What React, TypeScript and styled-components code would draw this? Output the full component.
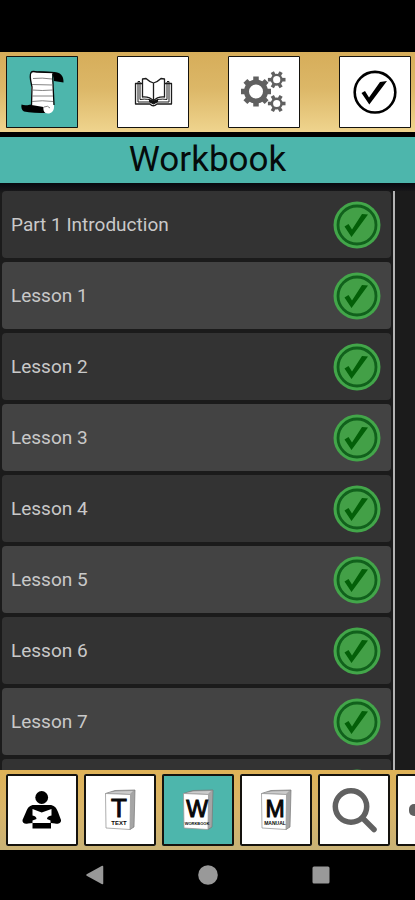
import React from "react";
import styled, { createGlobalStyle } from "styled-components";

const GlobalStyle = createGlobalStyle`
  *, *::before, *::after { box-sizing: border-box; }
  body { margin: 0; background: #000; font-family: Roboto, "Liberation Sans", sans-serif; }
  button { font: inherit; padding: 0; border: 0; background: none; cursor: pointer; }
  svg { display: block; flex: none; }
`;

const TEAL = "#4db6ac";

const Screen = styled.div`
  display: flex;
  flex-direction: column;
  height: 100vh;
  overflow: hidden;
  background: #000;
`;

const StatusBar = styled.div`
  flex: none;
  height: 52px;
`;

const TopBar = styled.nav`
  flex: none;
  display: flex;
  justify-content: space-between;
  padding: 4px 4px 4px 6px;
  background: linear-gradient(#d6ad5a, #dcb767 45%, #efd48e);
`;

const BottomBar = styled.nav`
  flex: none;
  display: flex;
  gap: 6px;
  padding: 4px 6px;
  overflow: hidden;
  background: linear-gradient(#dfb257, #d9b569 50%, #c9b276);
`;

const Tile = styled.button<{ $active?: boolean; $line: number }>`
  flex: none;
  border-radius: ${(p) => p.$line}px;
  background: ${(p) => (p.$active ? TEAL : "#fff")};
  box-shadow: inset 0 0 0 ${(p) => p.$line}px #15130e;
`;

const Title = styled.h1`
  flex: none;
  margin: 5px 0 0;
  height: 46px;
  background: ${TEAL};
  color: #050b0b;
  font-size: 35px;
  font-weight: 400;
  line-height: 46px;
  text-align: center;
`;

const Content = styled.main`
  flex: 1;
  min-height: 0;
  display: flex;
  padding-top: 8px;
  overflow: hidden;
  background: linear-gradient(#080a10, #1b1b1b 10px);
`;

const Lessons = styled.ul`
  flex: 1;
  margin: 0;
  padding: 0 2px;
  list-style: none;
  display: flex;
  flex-direction: column;
  gap: 4px;
`;

const ScrollTrack = styled.div`
  flex: none;
  width: 22px;
  border-left: 2px solid #b4b4b4;
  background: #1b1b1b;
`;

const Lesson = styled.li`
  flex: none;
  &:nth-child(odd) { background: #333; }
  &:nth-child(even) { background: #434343; }
  border-radius: 4px;
`;

const LessonButton = styled.button`
  display: flex;
  align-items: center;
  justify-content: space-between;
  width: 100%;
  height: 67px;
  padding: 0 10px 0 9px;
  color: #c9c9c9;
  font-size: 19px;
  line-height: 24px;
  text-align: left;
`;

const SystemNav = styled.nav`
  flex: none;
  display: flex;
  justify-content: center;
  gap: 65px;
  height: 50px;
`;

const SystemButton = styled.button`
  display: grid;
  place-items: center;
  width: 48px;
`;

const TileArt = ({ children }: { children: React.ReactNode }) => (
  <svg width="72" height="72" viewBox="0 0 72 72" aria-hidden="true">
    {children}
  </svg>
);

const ScrollIcon = () => (
  <TileArt>
    <path d="M27 15 48 16C54 16 58 20 57.500 26.500L48 25C48 21 47 19 45 18Z" fill="#000" />
    <path d="M15.500 48.500C19 50 23 49 28 48L42 50V57C32 57 24 57 18 55.500C15.500 54 15 51 15.500 48.500Z" fill="#000" />
    <path d="M25 18C26 15 29 15.500 31 16L47 16.500C45 19 46.500 23 47 28L48 51C48 55 45.500 57.500 42 57.500C38 57.500 37 54 37.500 51L25.500 49Z" fill="#fff" />
    <path d="M25.500 49 26 31C25 26 23 20 25 16.500C26 15 29 15.500 31 16L48 16.500C46 20 47 24 47 28L48 49" fill="none" stroke="#050505" strokeWidth="1.300" />
    <path d="M27 22.500Q36 21.500 46 23M26 28.500 47 29M26 34Q36 35 47 34M26 40 47 40M26 45.500Q36 44 47 45.500M38 51Q42 49 44 52" fill="none" stroke="#777" strokeWidth="0.900" />
  </TileArt>
);

const OpenBookIcon = () => (
  <TileArt>
    <g fill="none" stroke="#1c1c1c" strokeWidth="1.300" strokeLinejoin="round">
      <path d="M25 27.500H18.500V48H33Q36 51.500 40 48H54.500V27.500H48" />
      <path d="M23 25.500H21V46H33L36.500 48 40 46H52V25.500H50" strokeWidth="1" />
      <path d="M23 26V43.500Q32 42 36.500 46Q41 42 50 43.500V26" strokeWidth="1" />
      <path d="M36.500 27Q32 25.500 29 22.500L25.500 23V41Q33 40.500 36.500 45Q40 40.500 47.500 41V23L44 22.500Q41 25.500 36.500 27V44" />
    </g>
    <path d="M32 43 36.500 45 41 43V46L36.500 48 32 46Z" fill="#111" />
  </TileArt>
);

type GearProps = { x: number; y: number; r: number; body: number; hole: number; teeth: number; tooth: number };

const Gear = ({ x, y, r, body, hole, teeth, tooth }: GearProps) => (
  <g transform={`translate(${x} ${y})`}>
    <circle r={(body + hole) / 2} fill="none" stroke="#606060" strokeWidth={body - hole} />
    {Array.from({ length: teeth }, (_, i) => (
      <rect
        key={i}
        x={body - 1}
        y={-tooth / 2}
        width={r - body + 1}
        height={tooth}
        fill="#606060"
        transform={`rotate(${(i * 360) / teeth})`}
      />
    ))}
  </g>
);

const GearsIcon = () => (
  <TileArt>
    <Gear x={28} y={35.5} r={15} body={12} hole={7} teeth={8} tooth={5.5} />
    <Gear x={48.7} y={23.7} r={8.8} body={6} hole={3.6} teeth={6} tooth={3.6} />
    <Gear x={48.7} y={47.5} r={8.8} body={6} hole={3.6} teeth={6} tooth={3.6} />
  </TileArt>
);

const CheckIcon = () => (
  <TileArt>
    <circle cx="36" cy="36.200" r="20.300" fill="none" stroke="#000" strokeWidth="2.600" />
    <path d="M22.500 37 26 35 30 41.500 41 26 48 25 30.300 48.500Z" fill="#000" />
  </TileArt>
);

const DoneBadge = () => (
  <svg width="48" height="48" viewBox="0 0 48 48" role="img" aria-label="Completed">
    <circle cx="24" cy="24" r="23.500" fill="#43a64a" />
    <circle cx="24" cy="24" r="19" fill="#43a047" stroke="#11611c" strokeWidth="2.800" />
    <path d="M11.500 25.500 15.500 23 19 28.500 29 13 35 13.500 18.500 36Z" fill="#035f08" />
  </svg>
);

const ReaderIcon = () => (
  <TileArt>
    <circle cx="35.700" cy="23.500" r="6.400" fill="#000" />
    <path d="M28 31H43.500C48 31 50 33 52 38L55 46C55.500 49 52 50.500 49 49.500L45 49V54.500H26.500V49L22 49.500C19 50.500 16 49 16.500 46L20 38C22 33 24 31 28 31Z" fill="#000" />
    <path d="M26.500 35 35.700 38.500 45.500 35V41.500Q41 42 41 45L44.500 46.500V49H26.500V46.500L30.500 45Q30.500 42 26.500 41.500Z" fill="#fff" />
  </TileArt>
);

type VolumeProps = { letter: string; label: string; labelSize: number; letterSize: number };

const VolumeIcon = ({ letter, label, labelSize, letterSize }: VolumeProps) => (
  <TileArt>
    <path d="M21.500 19.500 31 16.500 51 16 50 53 46 55.500Z" fill="#a5a5a5" stroke="#777" strokeWidth="0.700" />
    <path d="M24 19 32 17.500 49 17 46 20Z" fill="#ccc" />
    <path d="M21.500 19.500 46.500 20.500 46 55.500 22 54Z" fill="#fff" stroke="#999" strokeWidth="0.800" />
    <g fill="#080808" textAnchor="middle" fontFamily="Liberation Sans, sans-serif">
      <text x="35" y="43" fontSize={letterSize} stroke="#080808" strokeWidth="1">{letter}</text>
      <text x="35" y="51" fontSize={labelSize} fontWeight="700">{label}</text>
    </g>
  </TileArt>
);

const SearchIcon = () => (
  <TileArt>
    <circle cx="33" cy="32.500" r="15.700" fill="none" stroke="#616161" strokeWidth="5.500" />
    <path d="M44.500 44 56 55.500" stroke="#616161" strokeWidth="5.500" strokeLinecap="round" />
  </TileArt>
);

const MoreIcon = () => (
  <TileArt>
    <rect x="13" y="30" width="46" height="12" rx="5" fill="#606060" />
  </TileArt>
);

const topItems = [
  { name: "Lessons", icon: <ScrollIcon />, active: true },
  { name: "Reading", icon: <OpenBookIcon /> },
  { name: "Settings", icon: <GearsIcon /> },
  { name: "Completed", icon: <CheckIcon /> },
];

const bottomItems = [
  { name: "Reader", icon: <ReaderIcon /> },
  { name: "Text", icon: <VolumeIcon letter="T" label="TEXT" letterSize={26} labelSize={6} /> },
  { name: "Workbook", icon: <VolumeIcon letter="W" label="WORKBOOK" letterSize={23} labelSize={4} />, active: true },
  { name: "Manual", icon: <VolumeIcon letter="M" label="MANUAL" letterSize={23} labelSize={5} /> },
  { name: "Search", icon: <SearchIcon /> },
  { name: "More", icon: <MoreIcon /> },
];

const lessons = ["Part 1 Introduction", ...Array.from({ length: 8 }, (_, i) => `Lesson ${i + 1}`)];

export default function App() {
  return (
    <Screen>
      <GlobalStyle />
      <StatusBar />
      <TopBar aria-label="Sections">
        {topItems.map((item) => (
          <Tile key={item.name} type="button" aria-label={item.name} $active={item.active} $line={1}>
            {item.icon}
          </Tile>
        ))}
      </TopBar>
      <Title>Workbook</Title>
      <Content>
        <Lessons>
          {lessons.map((lesson) => (
            <Lesson key={lesson}>
              <LessonButton type="button">
                {lesson}
                <DoneBadge />
              </LessonButton>
            </Lesson>
          ))}
        </Lessons>
        <ScrollTrack />
      </Content>
      <BottomBar aria-label="Books">
        {bottomItems.map((item) => (
          <Tile key={item.name} type="button" aria-label={item.name} $active={item.active} $line={2}>
            {item.icon}
          </Tile>
        ))}
      </BottomBar>
      <SystemNav aria-label="System">
        <SystemButton type="button" aria-label="Back">
          <svg width="20" height="20" viewBox="0 0 20 20">
            <path d="M2 10 17.500 1.500V18.500Z" fill="#999" stroke="#999" strokeWidth="1.500" strokeLinejoin="round" />
          </svg>
        </SystemButton>
        <SystemButton type="button" aria-label="Home">
          <svg width="20" height="20" viewBox="0 0 20 20">
            <circle cx="10" cy="10" r="9.800" fill="#999" />
          </svg>
        </SystemButton>
        <SystemButton type="button" aria-label="Recent apps">
          <svg width="20" height="20" viewBox="0 0 20 20">
            <rect x="1.500" y="1.500" width="17" height="17" rx="1.500" fill="#999" />
          </svg>
        </SystemButton>
      </SystemNav>
    </Screen>
  );
}
